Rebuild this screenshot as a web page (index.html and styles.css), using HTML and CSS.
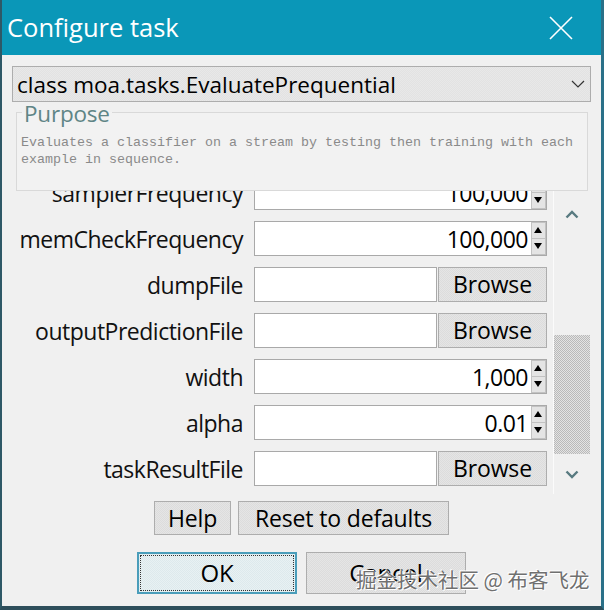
FILE: index.html
```html
<!DOCTYPE html>
<html>
<head>
<meta charset="utf-8">
<link rel="stylesheet" href="styles.css">
</head>
<body>
<div class="window">
  <div class="titlebar">
    <span class="title">Configure task</span>
    <svg class="close" width="24" height="24" viewBox="0 0 24 24"><path d="M1 1 L23 23 M23 1 L1 23" stroke="#fff" stroke-width="1.6" fill="none"/></svg>
  </div>
  <div class="body">
    <div class="combo">
      <span class="combo-text">class moa.tasks.EvaluatePrequential</span>
      <svg class="combo-arrow" width="14" height="8" viewBox="0 0 14 8"><path d="M1 1 L7 7 L13 1" stroke="#333" stroke-width="1.2" fill="none"/></svg>
    </div>
    <fieldset class="purpose">
      <legend>Purpose</legend>
      <p>Evaluates a classifier on a stream by testing then training with each<br>example in sequence.</p>
    </fieldset>
    <div class="scrollpane">
      <div class="viewport">
        <div class="rows">
          <div class="row"><span class="label">samplerFrequency</span>
            <div class="field num"><span class="val">100,000</span><span class="spin"><span class="up"></span><span class="down"></span></span></div></div>
          <div class="row"><span class="label">memCheckFrequency</span>
            <div class="field num"><span class="val">100,000</span><span class="spin"><span class="up"></span><span class="down"></span></span></div></div>
          <div class="row"><span class="label">dumpFile</span>
            <div class="filebox"><div class="field"></div><button class="btn browse">Browse</button></div></div>
          <div class="row"><span class="label">outputPredictionFile</span>
            <div class="filebox"><div class="field"></div><button class="btn browse">Browse</button></div></div>
          <div class="row"><span class="label">width</span>
            <div class="field num"><span class="val">1,000</span><span class="spin"><span class="up"></span><span class="down"></span></span></div></div>
          <div class="row"><span class="label">alpha</span>
            <div class="field num"><span class="val">0.01</span><span class="spin"><span class="up"></span><span class="down"></span></span></div></div>
          <div class="row"><span class="label">taskResultFile</span>
            <div class="filebox"><div class="field"></div><button class="btn browse">Browse</button></div></div>
        </div>
      </div>
      <div class="vscroll">
        <div class="sbtn up-btn"><svg width="14" height="9" viewBox="0 0 14 9"><path d="M1.5 7.5 L7 2 L12.5 7.5" stroke="#587a80" stroke-width="2.4" fill="none"/></svg></div>
        <div class="track"><div class="thumb"></div></div>
        <div class="sbtn down-btn"><svg width="14" height="9" viewBox="0 0 14 9"><path d="M1.5 1.5 L7 7 L12.5 1.5" stroke="#587a80" stroke-width="2.4" fill="none"/></svg></div>
      </div>
    </div>
    <div class="btnrow row1">
      <button class="btn help">Help</button>
      <button class="btn reset">Reset to defaults</button>
    </div>
    <div class="btnrow row2">
      <button class="btn big ok">OK</button>
      <button class="btn big">Cancel</button>
    </div>
  </div>
  <div class="watermark">掘金技术社区 @ 布客飞龙</div>
</div>
</body>
</html>
```
FILE: styles.css
```css
* { box-sizing: border-box; }
html, body { margin: 0; padding: 0; }
body {
  width: 604px;
  height: 610px;
  overflow: hidden;
  background: #f0f0f0;
  font-family: "Open Sans", "Noto Sans", sans-serif;
}
.window {
  position: relative;
  width: 604px;
  height: 610px;
  overflow: hidden;
  display: flex;
  flex-direction: column;
  border-left: 2px solid #2e5866;
  border-right: 3px solid #2a7088;
  border-bottom: 4px solid #2e4e5b;
  background: #f0f0f0;
}
.titlebar {
  height: 55px;
  flex: none;
  background: #0a97b8;
  display: flex;
  align-items: center;
  justify-content: space-between;
  padding: 0 28px 2px 5px;
}
.title {
  color: #fff;
  font-size: 25.5px;
}
.close { display: block; margin-top: 2px; }
.body {
  flex: 1;
  display: flex;
  flex-direction: column;
  padding: 11px 10px 0 10px;
}
.combo {
  height: 36px;
  flex: none;
  border: 1px solid #adadad;
  background: repeating-conic-gradient(#e2e2e2 0 25%, #e8e8e8 0 50%) 0 0 / 2px 2px;
  display: flex;
  align-items: center;
  justify-content: space-between;
  padding: 0 5px 0 4px;
}
.combo-text { font-size: 22.5px; color: #000; }
.combo-arrow { display: block; }
.purpose {
  flex: none;
  margin: -2px 3px 0 4px;
  padding: 0 4px 0 4px;
  border: 1px solid #d9d9d9;
  height: 91px;
  background: #f2f2f2;
}
.purpose legend {
  font-size: 22.5px;
  color: #5f8586;
  padding: 4px 2px 0 2px;
  margin-left: 1px;
  line-height: 20px;
  letter-spacing: -0.2px;
}
.purpose p {
  margin: 10px 0 0 0;
  font-family: "Liberation Mono", monospace;
  font-size: 13.33px;
  line-height: 17.3px;
  color: #8a8a8a;
}
.scrollpane {
  flex: none;
  height: 303px;
  margin: 0 1px 0 4px;
  display: flex;
}
.viewport {
  flex: 1;
  overflow: hidden;
}
.rows {
  margin-top: -16px;
  display: flex;
  flex-direction: column;
  gap: 11px;
}
.row {
  display: grid;
  grid-template-columns: 227px 293px;
  column-gap: 11px;
  height: 35px;
  align-items: center;
}
.label {
  text-align: right;
  font-size: 23px;
  letter-spacing: -0.5px;
  color: #111;
  white-space: nowrap;
}
.field {
  height: 35px;
  border: 1px solid #a9a9a9;
  background: #fff;
}
.field.num {
  display: flex;
  align-items: center;
  justify-content: flex-end;
}
.val {
  font-size: 23px;
  letter-spacing: -0.5px;
  color: #000;
  padding-right: 3px;
}
.spin {
  width: 15px;
  align-self: stretch;
  display: flex;
  flex-direction: column;
}
.spin span {
  flex: 1;
  background: #e4e4e4;
  border: 1px solid #c2c2c2;
  position: relative;
}
.spin .up { border-bottom: none; }
.spin .up::after, .spin .down::after {
  content: "";
  position: absolute;
  left: 2px;
  width: 0;
  height: 0;
  border-left: 4.5px solid transparent;
  border-right: 4.5px solid transparent;
}
.spin .up::after { top: 4px; border-bottom: 6px solid #000; }
.spin .down::after { top: 4px; border-top: 6px solid #000; }
.filebox {
  display: flex;
  gap: 1px;
  height: 35px;
}
.filebox .field { width: 183px; }
.btn {
  font-family: "Open Sans", "Noto Sans", sans-serif;
  font-size: 23px;
  letter-spacing: -0.15px;
  color: #000;
  border: 1px solid #adadad;
  background: repeating-conic-gradient(#dcdcdc 0 25%, #e5e5e5 0 50%) 0 0 / 2px 2px;
  padding: 0;
  margin: 0;
  line-height: 1;
}
.browse { width: 109px; height: 35px; }
.vscroll {
  width: 37px;
  border-left: 1px solid #fbfbfb;
  display: flex;
  flex-direction: column;
}
.sbtn {
  display: flex;
  align-items: center;
  justify-content: center;
}
.sbtn svg { display: block; }
.up-btn { height: 46px; }
.down-btn { height: 40px; }
.track {
  flex: 1;
  display: flex;
  flex-direction: column;
  justify-content: flex-end;
}
.thumb {
  height: 119px;
  background: repeating-conic-gradient(#b9b9b9 0 25%, #e3e3e3 0 50%) 0 0 / 2px 2px;
}
.btnrow {
  display: flex;
  justify-content: center;
}
.row1 { margin-top: 7px; gap: 7px; }
.row1 .btn { height: 34px; }
.help { width: 77px; }
.reset { width: 211px; }
.row2 { margin-top: 17px; gap: 9px; }
.big { width: 160px; height: 42px; font-size: 24px; }
.ok {
  position: relative;
  border: 2px solid #4a9dba;
  background: repeating-conic-gradient(#dde9ec 0 25%, #e8f1f3 0 50%) 0 0 / 2px 2px;
}
.ok::after {
  content: "";
  position: absolute;
  inset: 1px;
  border: 1px dotted #333;
}
.watermark {
  position: absolute;
  left: 354px;
  top: 564px;
  font-family: "Noto Sans CJK SC", sans-serif;
  font-size: 20.5px;
  line-height: 30px;
  color: #707070;
  text-shadow: 0 0 1px #fff, 1px 1px 0 #fff, -1px -1px 0 #fff;
  white-space: nowrap;
}
```
